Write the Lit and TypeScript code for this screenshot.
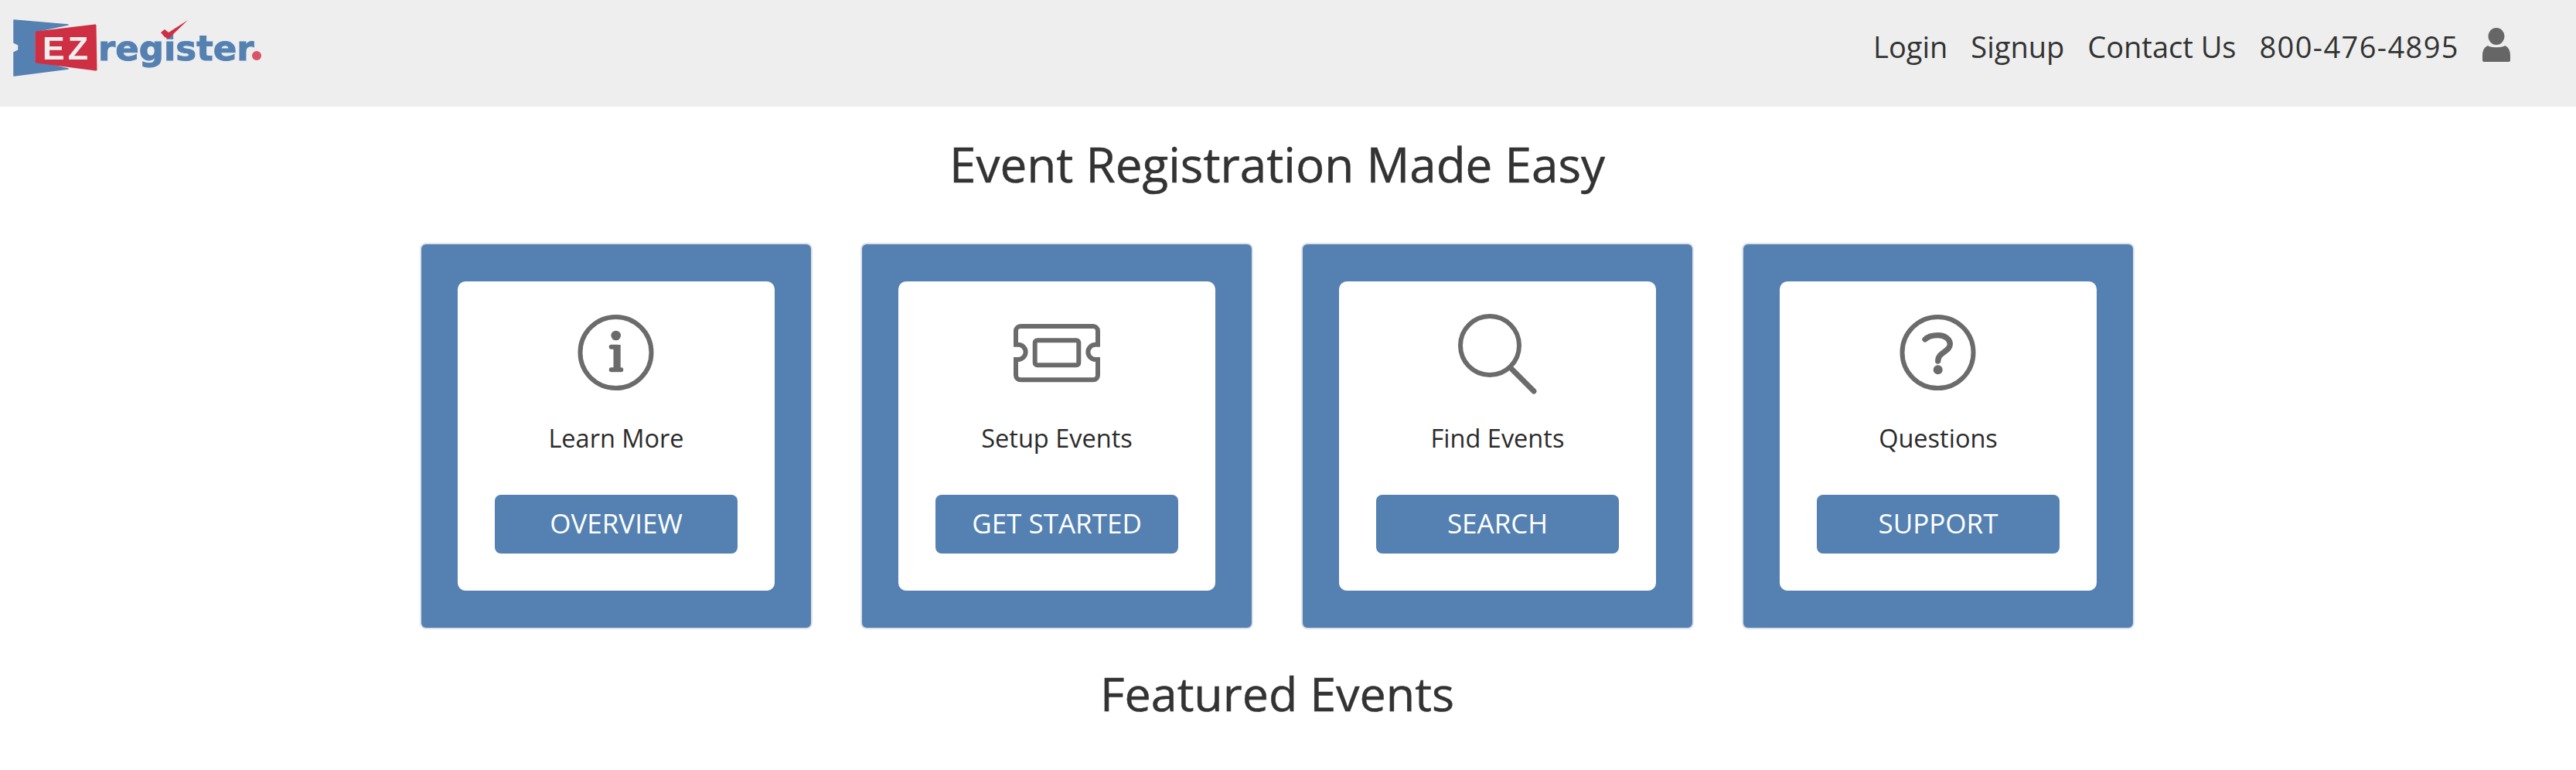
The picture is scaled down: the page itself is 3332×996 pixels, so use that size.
import { LitElement, html, css, svg } from 'lit';
import { customElement } from 'lit/decorators.js';

const infoIcon = svg`
  <circle cx="49.5" cy="49" r="46" fill="none" stroke="#6b6b6b" stroke-width="6" />
  <circle cx="49.7" cy="27" r="6.3" fill="#6b6b6b" />
  <path d="M43.7 41.7h8M43.7 71.3h12.6" fill="none" stroke="#6b6b6b" stroke-width="6" stroke-linecap="round" />
  <rect x="46.5" y="39" width="9.2" height="33" fill="#6b6b6b" />
`;

const ticketIcon = svg`
  <path d="M3 15H97a6 6 0 0 1 6 6V38.7H100a9.65 9.65 0 0 0 0 19.3H103V78.3a6 6 0 0 1-6 6H3a6 6 0 0 1-6-6V58H0a9.65 9.65 0 0 0 0-19.3H-3V21a6 6 0 0 1 6-6z" fill="none" stroke="#6b6b6b" stroke-width="6" />
  <rect x="21.7" y="33.3" width="56.6" height="32" rx="3" fill="none" stroke="#6b6b6b" stroke-width="6" />
`;

const searchIcon = svg`
  <circle cx="40" cy="40" r="38" fill="none" stroke="#6b6b6b" stroke-width="6" />
  <path d="M69 71l28 28" fill="none" stroke="#6b6b6b" stroke-width="7" stroke-linecap="round" />
`;

const helpIcon = svg`
  <circle cx="49.5" cy="49" r="46" fill="none" stroke="#6b6b6b" stroke-width="6" />
  <path d="M33 32C38 27 44 26.6 50 26.6C59 26.6 65.4 32 65.4 38C65.4 48 50 48 49.7 60" fill="none" stroke="#6b6b6b" stroke-width="7.3" stroke-linecap="round" />
  <circle cx="49.7" cy="71.3" r="6" fill="#6b6b6b" />
`;

const cards = [
  { icon: infoIcon, label: 'Learn More', action: 'OVERVIEW' },
  { icon: ticketIcon, label: 'Setup Events', action: 'GET STARTED' },
  { icon: searchIcon, label: 'Find Events', action: 'SEARCH' },
  { icon: helpIcon, label: 'Questions', action: 'SUPPORT' },
];

@customElement('app-root')
export class AppRoot extends LitElement {
  static styles = css`
    :host {
      display: block;
      background: #fff;
      min-height: 996px;
      font-family: 'Open Sans', 'Noto Sans', sans-serif;
      color: #333;
      overflow: hidden;
    }
    .topbar {
      height: 138px;
      background: #eee;
      display: flex;
      align-items: center;
      justify-content: space-between;
      padding: 0 85px 0 17px;
      box-sizing: border-box;
    }
    .logo {
      display: block;
      width: 325px;
      height: 80px;
      margin-top: -18px;
      filter: blur(0.7px);
    }
    .nav {
      display: flex;
      align-items: center;
      gap: 30px;
      font-size: 38px;
      margin-top: -18px;
    }
    .nav a {
      color: #333;
      text-decoration: none;
    }
    .nav .phone {
      letter-spacing: 1.4px;
    }
    .user {
      display: block;
      width: 36px;
      height: 44px;
      margin-top: -4px;
    }
    main {
      padding-right: 28px;
      display: flex;
      flex-direction: column;
      align-items: center;
    }
    h1,
    h2 {
      margin: 0;
      font-weight: 400;
      line-height: 80px;
      color: #333;
      -webkit-text-stroke: 0.5px #333;
    }
    h1 {
      font-size: 62px;
      margin-top: 34px;
    }
    h2 {
      font-size: 61px;
      margin-top: 43px;
    }
    .cards {
      display: flex;
      gap: 62px;
      margin-top: 62px;
    }
    .card {
      width: 508px;
      height: 500px;
      box-sizing: border-box;
      background: #5481b2;
      border: 2px solid #dfe3e8;
      border-radius: 8px;
      padding: 48px 47px;
    }
    .inner {
      height: 400px;
      box-sizing: border-box;
      background: #fff;
      border-radius: 10px;
      padding-top: 43px;
      display: flex;
      flex-direction: column;
      align-items: center;
    }
    .icon {
      display: block;
      width: 100px;
      height: 100px;
      overflow: visible;
    }
    .label {
      margin-top: 40px;
      font-size: 32.5px;
      line-height: 40px;
      color: #2b2b2b;
    }
    .btn {
      margin-top: 53px;
      width: 314px;
      height: 76px;
      border: 0;
      border-radius: 8px;
      background: #5481b2;
      color: #fff;
      font-family: inherit;
      font-size: 35px;
      line-height: 72px;
      padding: 0 0 2px;
    }
  `;

  render() {
    return html`
      <header class="topbar">
        <svg class="logo" viewBox="0 0 325 80" role="img" aria-label="EZregister">
          <path d="M1 6l70 6-43 9v38l43 10-70 9V48l6-3v-7l-6-3z" fill="#5481b2" stroke="#5481b2" stroke-width="1.5" stroke-linejoin="round" />
          <path d="M30 22l76-9 1 57-77-10z" fill="#cf2f43" stroke="#cf2f43" stroke-width="3" stroke-linejoin="round" />
          <text x="38" y="57" font-family="Liberation Sans" font-weight="700" font-size="43" letter-spacing="4" fill="#eee">EZ</text>
          <text x="110" y="58" font-family="DejaVu Sans" font-weight="700" font-size="45" fill="#5481b2" stroke="#5481b2" stroke-width="1">register</text>
          <path d="M191 22l5-4 5 4 25-16-25 24-5-2z" fill="#cf2f43" />
          <circle cx="315" cy="52" r="6" fill="#d9536a" />
        </svg>
        <nav class="nav">
          <a>Login</a>
          <a>Signup</a>
          <a>Contact Us</a>
          <a class="phone">800-476-4895</a>
          <svg class="user" viewBox="0 0 36 44">
            <ellipse cx="18" cy="11" rx="10.5" ry="11" fill="#666" />
            <path d="M7 23c3 3 19 3 22 0 5 2 7 7 7 13v6a2 2 0 0 1-2 2H2a2 2 0 0 1-2-2v-6c0-6 2-11 7-13z" fill="#666" />
          </svg>
        </nav>
      </header>
      <main>
        <h1>Event Registration Made Easy</h1>
        <section class="cards">
          ${cards.map(
            (c) => html`
              <div class="card">
                <div class="inner">
                  <svg class="icon" viewBox="0 0 100 100">${c.icon}</svg>
                  <div class="label">${c.label}</div>
                  <button class="btn">${c.action}</button>
                </div>
              </div>
            `,
          )}
        </section>
        <h2>Featured Events</h2>
      </main>
    `;
  }
}
